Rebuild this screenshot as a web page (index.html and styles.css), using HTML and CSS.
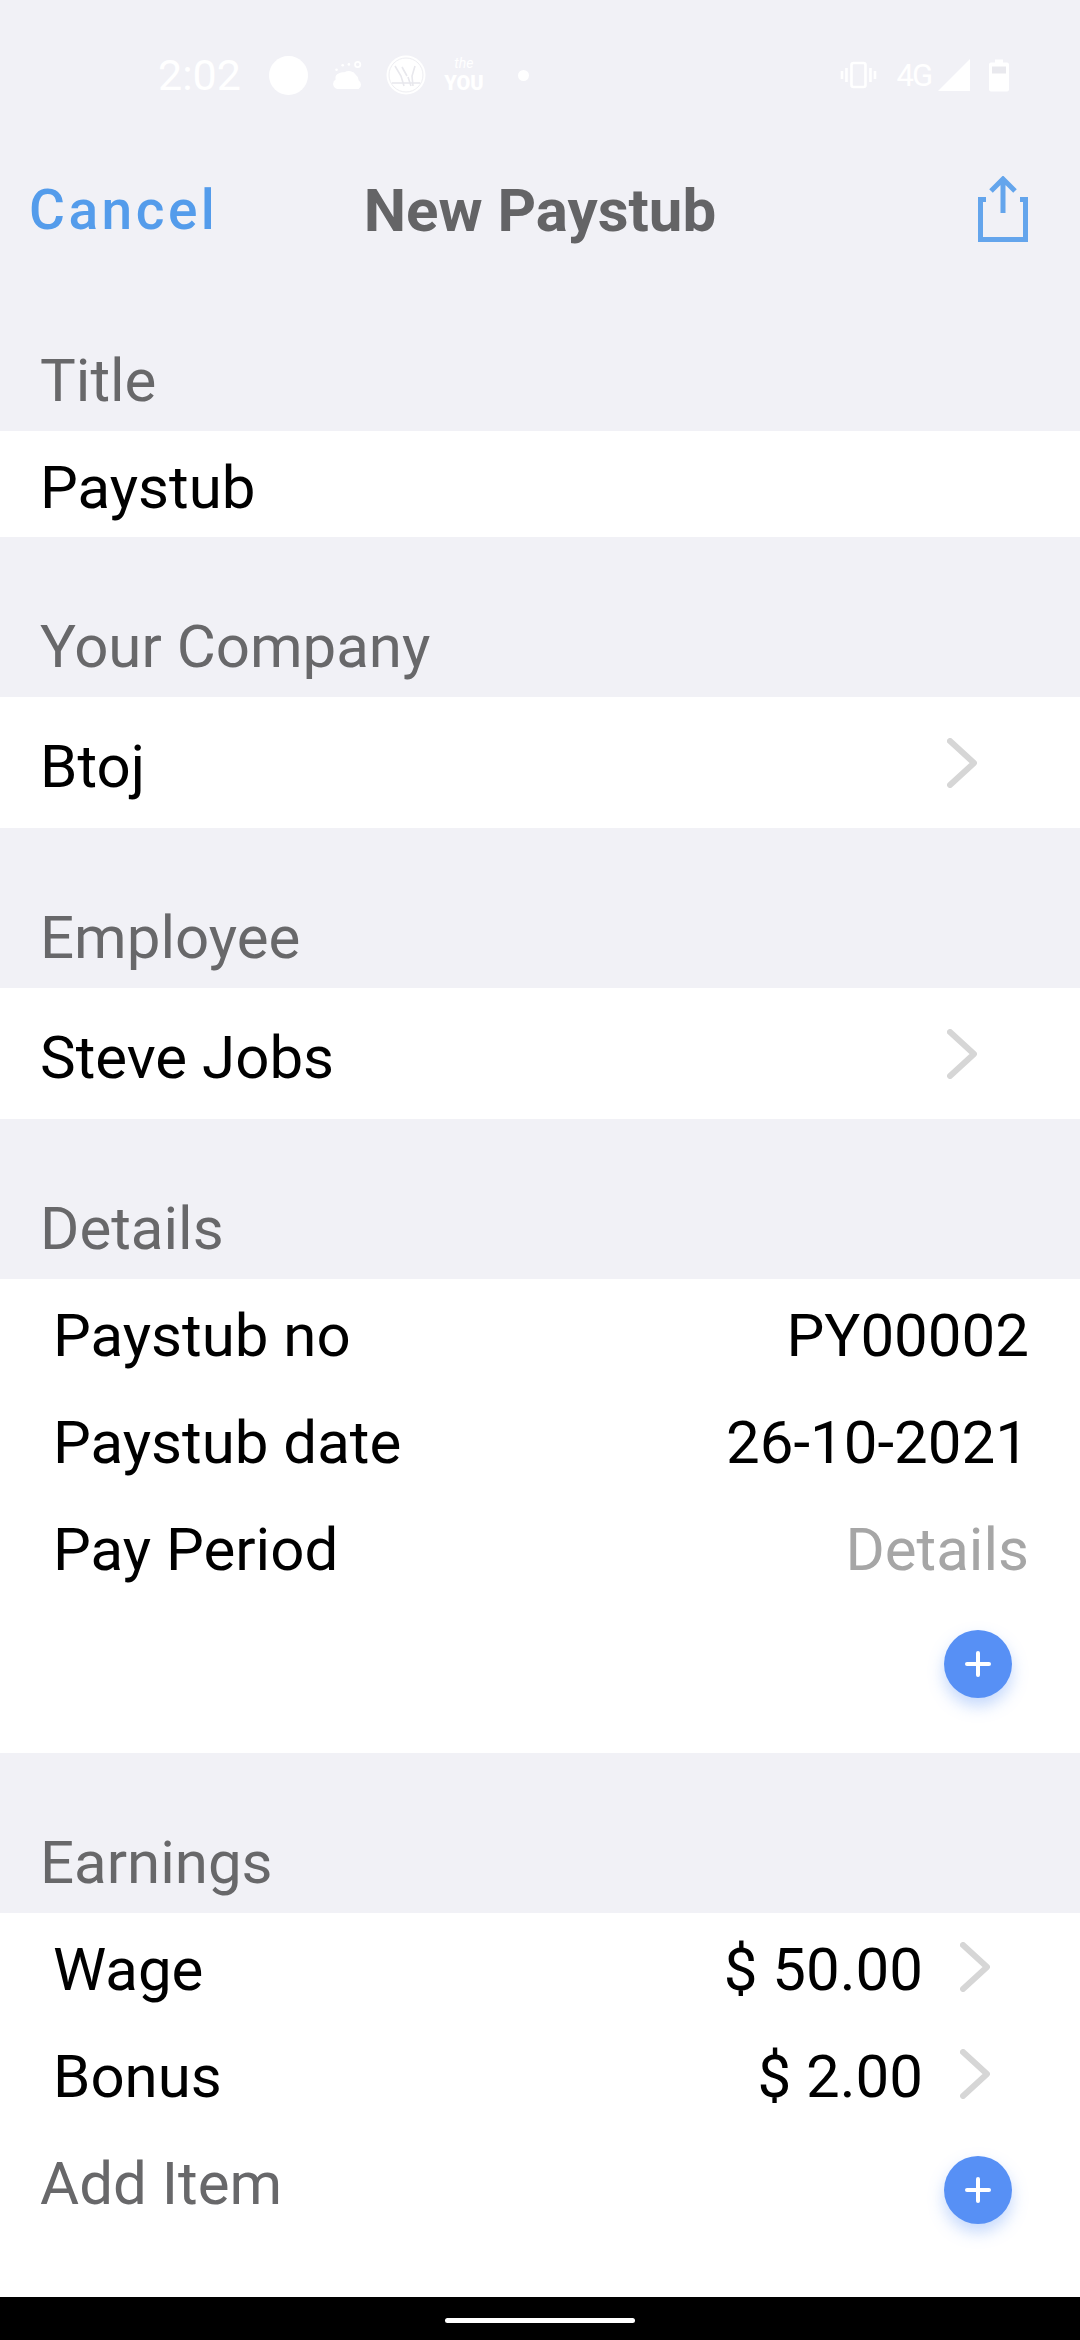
FILE: index.html
```html
<!DOCTYPE html>
<html lang="en">
<head>
  <meta charset="UTF-8" />
  <title>New Paystub</title>
  <link rel="stylesheet" href="styles.css">
</head>
<body>
  <div class="status-bar">
    <div class="status-left">
      <span class="clock">2:02</span>
      <span class="dot-big"></span>
      <svg class="st-icon" width="32" height="30" viewBox="0 0 36 34" fill="#fff"><path d="M6 33a6 6 0 0 1-2-11 6 6 0 0 1 4-7 8 8 0 0 1 6-1 9 9 0 0 1 13 3 7 7 0 0 1 3 6 6 6 0 0 1 0 10z"/><circle cx="29" cy="5" r="3" fill="none" stroke="#fff" stroke-width="2"/><circle cx="5" cy="11" r="1.500"/><circle cx="12" cy="6" r="1.500"/><circle cx="19" cy="5" r="1.500"/></svg>
      <svg class="st-icon globe" width="40" height="40" viewBox="0 0 40 40"><circle cx="20" cy="20" r="19.500" fill="#fff"/><circle cx="20" cy="20" r="17" fill="none" stroke="#eeeef2" stroke-width="1"/><path d="M9 11l6 10 3 10M16 12l5 9M29 11l-3 10 1 10M22 22l3 9M6 28h28" stroke="#e8e8ed" stroke-width="1.600" fill="none"/></svg>
      <span class="the-you"><i>the</i><b>YOU</b></span>
      <span class="dot-small"></span>
    </div>
    <div class="status-right">
      <svg width="37" height="28" viewBox="0 0 36 28" fill="none" stroke="#fff" stroke-width="2.600"><rect x="11" y="2" width="14" height="24" rx="2"/><path d="M6 7v14M1.500 10v8M30 7v14M34.500 10v8"/></svg>
      <span class="net">4G</span>
      <svg class="signal" width="32" height="32" viewBox="0 0 32 32" fill="#fff"><path d="M32 0v32H0z"/></svg>
      <svg class="battery" width="20" height="33" viewBox="0 0 20 32" fill="#fff"><path d="M6 0h8v3h4a2 2 0 0 1 2 2v25a2 2 0 0 1-2 2H2a2 2 0 0 1-2-2V5a2 2 0 0 1 2-2h4z"/><rect x="3" y="7" width="14" height="7" fill="#e9e9ee"/></svg>
    </div>
  </div>

  <header class="nav">
    <span class="cancel">Cancel</span>
    <h1>New Paystub</h1>
    <svg class="share" width="50" height="66" viewBox="0 0 50 66" fill="none" stroke="#64a5ec" stroke-width="5"><path d="M8 23.500H2.500v40h45v-40H42"/><path d="M25 37V3M13 15L25 3l12 12"/></svg>
  </header>

  <section>
    <h2>Title</h2>
    <div class="card row-text">Paystub</div>
  </section>

  <section>
    <h2>Your Company</h2>
    <div class="card row-link">
      <span>Btoj</span>
      <svg class="chevron" width="30" height="50" viewBox="0 0 30 50"><path d="M3 3l24 22L3 47"/></svg>
    </div>
  </section>

  <section>
    <h2>Employee</h2>
    <div class="card row-link">
      <span>Steve Jobs</span>
      <svg class="chevron" width="30" height="50" viewBox="0 0 30 50"><path d="M3 3l24 22L3 47"/></svg>
    </div>
  </section>

  <section>
    <h2>Details</h2>
    <div class="card list details">
      <div class="item"><span>Paystub no</span><span>PY00002</span></div>
      <div class="item"><span>Paystub date</span><span>26-10-2021</span></div>
      <div class="item"><span>Pay Period</span><span class="muted">Details</span></div>
      <div class="add-row"><span class="plus"></span></div>
    </div>
  </section>

  <section>
    <h2>Earnings</h2>
    <div class="card list earnings">
      <div class="item"><span>Wage</span><span class="amount">$ 50.00<svg class="chevron" width="30" height="50" viewBox="0 0 30 50"><path d="M3 3l24 22L3 47"/></svg></span></div>
      <div class="item"><span>Bonus</span><span class="amount">$ 2.00<svg class="chevron" width="30" height="50" viewBox="0 0 30 50"><path d="M3 3l24 22L3 47"/></svg></span></div>
      <div class="add-item"><span>Add Item</span><span class="plus"></span></div>
    </div>
  </section>

  <div class="home-bar"><span></span></div>
</body>
</html>
```

FILE: styles.css
```css
* {
  box-sizing: border-box;
  margin: 0;
  padding: 0;
}

body {
  width: 1080px;
  height: 2340px;
  overflow: hidden;
  background-color: #f1f1f6;
  font-family: Roboto, sans-serif;
  color: #000;
  display: flex;
  flex-direction: column;
}

.status-bar {
  height: 150px;
  display: flex;
  justify-content: space-between;
  align-items: center;
  padding: 0 71px 0 158px;
}

.status-left, .status-right {
  display: flex;
  align-items: center;
}

.clock {
  font-size: 43px;
  color: #fff;
  margin-right: 28px;
}

.dot-big {
  width: 39px;
  height: 39px;
  border-radius: 50%;
  background-color: #fff;
  margin-right: 24px;
}

.st-icon {
  margin-right: 22px;
}

.globe {
  margin-right: 18px;
}

.the-you {
  display: flex;
  flex-direction: column;
  align-items: center;
  color: #fff;
  width: 40px;
}

.the-you i {
  font-size: 14px;
}

.the-you b {
  font-size: 20px;
  font-weight: 900;
}

.dot-small {
  width: 11px;
  height: 11px;
  border-radius: 50%;
  background-color: #fff;
  margin-left: 34px;
}

.net {
  font-size: 31px;
  letter-spacing: -2px;
  color: #fff;
  margin-left: 19px;
}

.signal {
  margin-left: 7px;
}

.battery {
  margin-left: 19px;
}

.nav {
  height: 120px;
  padding: 0 29px;
  display: grid;
  grid-template-columns: 1fr auto 1fr;
  align-items: center;
}

.cancel {
  font-size: 55px;
  font-weight: 500;
  letter-spacing: 3.500px;
  color: #549ceb;
}

.nav h1 {
  font-size: 60px;
  font-weight: 700;
  color: #646466;
}

.share {
  justify-self: end;
  margin: -2px 23px 0 0;
}

section {
  display: flex;
  flex-direction: column;
}

section h2 {
  height: 160px;
  display: flex;
  align-items: flex-end;
  padding: 0 0 17px 40px;
  font-size: 60px;
  font-weight: 400;
  line-height: 66px;
  color: #68686a;
}

section:first-of-type h2 {
  height: 161px;
}

.card {
  background-color: #fff;
  font-size: 60px;
}

.row-text {
  height: 106px;
  padding: 7px 0 0 40px;
  display: flex;
  align-items: center;
}

.row-link {
  height: 131px;
  padding: 8px 103px 0 40px;
  display: flex;
  align-items: center;
  justify-content: space-between;
}

.row-link .chevron {
  margin-top: -8px;
}

.chevron {
  fill: none;
  stroke: #d6d6d6;
  stroke-width: 6;
  stroke-linecap: round;
  stroke-linejoin: round;
}

.list {
  padding-left: 53px;
}

.details {
  height: 474px;
  padding-right: 51px;
}

.earnings {
  height: 384px;
  padding-right: 90px;
}

.item {
  height: 107px;
  padding-top: 6px;
  display: flex;
  align-items: center;
  justify-content: space-between;
}

.muted {
  color: #a6a6a6;
}

.amount {
  display: flex;
  align-items: center;
  gap: 37px;
}

.amount .chevron {
  margin-top: -6px;
}

.add-row {
  display: flex;
  justify-content: flex-end;
  padding: 30px 17px 0 0;
}

.add-item {
  display: flex;
  justify-content: space-between;
  align-items: center;
  margin: 0 -22px 0 -13px;
  height: 107px;
  padding-top: 6px;
  color: #68686a;
}

.add-item .plus {
  margin-top: 12px;
}

.plus {
  position: relative;
  width: 68px;
  height: 68px;
  border-radius: 50%;
  background-color: #5790f5;
  box-shadow: 0 8px 16px rgba(87, 144, 245, 0.35);
}

.plus::before, .plus::after {
  content: "";
  position: absolute;
  background-color: #fff;
  border-radius: 2px;
}

.plus::before {
  left: 21px;
  top: 32px;
  width: 26px;
  height: 4px;
}

.plus::after {
  left: 32px;
  top: 21px;
  width: 4px;
  height: 26px;
}

.home-bar {
  height: 43px;
  background-color: #000;
  display: flex;
  justify-content: center;
  padding-top: 21px;
}

.home-bar span {
  width: 190px;
  height: 5px;
  border-radius: 3px;
  background-color: #fff;
}
```
